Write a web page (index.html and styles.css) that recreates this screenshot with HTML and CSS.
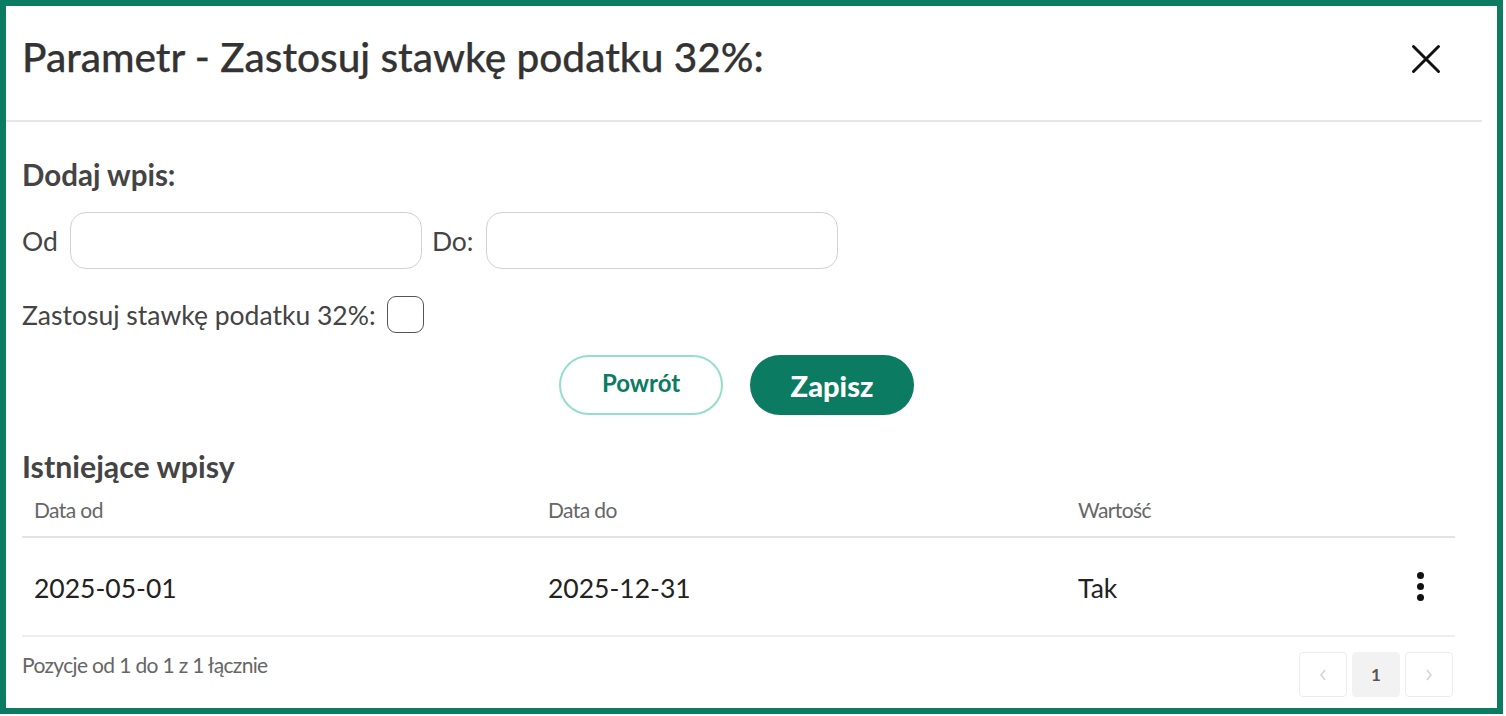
FILE: index.html
```html
<!DOCTYPE html>
<html lang="pl">
<head>
<meta charset="utf-8">
<link rel="stylesheet" href="styles.css">
</head>
<body>
<div class="frame">
  <div class="modal-head">
    <h1 class="title">Parametr - Zastosuj stawkę podatku 32%:</h1>
    <button class="close" aria-label="Zamknij">
      <svg width="30" height="30" viewBox="0 0 30 30"><path d="M2.5 2.5 L27.5 27.5 M27.5 2.5 L2.5 27.5" stroke="#111" stroke-width="3" stroke-linecap="round"/></svg>
    </button>
  </div>
  <div class="body">
    <h2 class="section">Dodaj wpis:</h2>
    <div class="range">
      <label class="lbl">Od</label>
      <div class="input"></div>
      <label class="lbl lbl-do">Do:</label>
      <div class="input"></div>
    </div>
    <div class="check-row">
      <span class="lbl">Zastosuj stawkę podatku 32%:</span>
      <span class="checkbox"></span>
    </div>
    <div class="actions">
      <button class="btn btn-outline">Powrót</button>
      <button class="btn btn-fill">Zapisz</button>
    </div>
    <h2 class="section section-list">Istniejące wpisy</h2>
    <div class="table">
      <div class="thead">
        <div>Data od</div>
        <div>Data do</div>
        <div>Wartość</div>
        <div></div>
      </div>
      <div class="trow">
        <div>2025-05-01</div>
        <div>2025-12-31</div>
        <div>Tak</div>
        <div class="menu-cell"><span class="kebab"><i></i><i></i><i></i></span></div>
      </div>
    </div>
    <div class="footer">
      <span class="info">Pozycje od 1 do 1 z 1 łącznie</span>
      <div class="pager">
        <span class="pg">
          <svg width="10" height="14" viewBox="0 0 10 14"><path d="M7 2 L3 7 L7 12" fill="none" stroke="#d4d4d4" stroke-width="1.6"/></svg>
        </span>
        <span class="pg pg-active">1</span>
        <span class="pg">
          <svg width="10" height="14" viewBox="0 0 10 14"><path d="M3 2 L7 7 L3 12" fill="none" stroke="#d4d4d4" stroke-width="1.6"/></svg>
        </span>
      </div>
    </div>
  </div>
</div>
</body>
</html>
```
FILE: styles.css
```css
* { box-sizing: border-box; }
html, body { margin: 0; padding: 0; background: #fff; }
body { font-family: Lato, "Open Sans", sans-serif; color: #333; }

.frame {
  width: 1503px;
  height: 714px;
  border: 6px solid #0b7b61;
  background: #fff;
  overflow: hidden;
}

.modal-head {
  display: flex;
  align-items: center;
  justify-content: space-between;
  height: 116px;
  margin-right: 15px;
  border-bottom: 2px solid #e6e6e6;
  padding-left: 16px;
  padding-right: 41px;
  padding-bottom: 12px;
}
.title {
  margin: 0;
  font-size: 40.6px;
  font-weight: 500;
  color: #333;
  line-height: 50px;
  -webkit-text-stroke: 0.25px #333;
}
.close {
  border: 0;
  background: none;
  padding: 0;
  width: 30px;
  height: 30px;
  display: flex;
  margin-top: 4px;
}

.body {
  padding: 0 42px 0 16px;
}
.section {
  margin: 36px 0 0;
  font-size: 29.5px;
  font-weight: 700;
  color: #444;
  line-height: 34px;
}
.range {
  display: flex;
  align-items: center;
  gap: 12px;
  margin-top: 20px;
}
.lbl {
  font-size: 26.5px;
  color: #444;
}
.lbl-do { margin-left: -2px; }
.input {
  width: 352px;
  height: 57px;
  border: 1.5px solid #d2d2d2;
  border-radius: 16px;
}
.check-row {
  display: flex;
  align-items: center;
  gap: 10px;
  margin-top: 27px;
}
.checkbox {
  width: 37px;
  height: 37px;
  border: 1.5px solid #555;
  border-radius: 9px;
  margin-left: 1px;
}
.actions {
  display: flex;
  justify-content: center;
  gap: 27px;
  margin-top: 22px;
  padding-right: 4px;
}
.btn {
  width: 164px;
  height: 60px;
  border-radius: 30px;
  font-family: Lato, sans-serif;
  font-weight: 700;
}
.btn-outline {
  background: #fff;
  border: 2px solid #95dec9;
  color: #0b7b61;
  font-size: 24px;
  padding-bottom: 6px;
}
.btn-fill {
  background: #0b7b61;
  border: 0;
  color: #fff;
  font-size: 29px;
  font-weight: 900;
}
.section-list { margin-top: 34px; font-size: 30.3px; }

.thead, .trow {
  display: grid;
  grid-template-columns: 514px 530px 1fr 70px;
  padding-left: 12px;
  align-items: center;
}
.thead {
  height: 55px;
  border-bottom: 2px solid #e3e3e3;
  font-size: 21px;
  color: #666;
  letter-spacing: -0.6px;
}
.trow {
  height: 99px;
  padding-top: 3px;
  border-bottom: 2px solid #eeeeee;
  font-size: 26.5px;
  color: #222;
}
.menu-cell { display: flex; justify-content: center; }
.kebab {
  display: flex;
  flex-direction: column;
  gap: 4px;
  margin-top: -3px;
}
.kebab i {
  width: 7px;
  height: 7px;
  border-radius: 50%;
  background: #111;
}

.footer {
  display: flex;
  justify-content: space-between;
  align-items: flex-start;
  margin-top: 15px;
  padding-right: 2px;
}
.info {
  font-size: 21px;
  line-height: 26px;
  color: #666;
  letter-spacing: -0.65px;
}
.pager {
  display: flex;
  gap: 5px;
}
.pg {
  width: 48px;
  height: 45px;
  border: 1.5px solid #ececec;
  border-radius: 4px;
  display: flex;
  align-items: center;
  justify-content: center;
  font-size: 17px;
  font-weight: 700;
  color: #555;
}
.pg-active {
  background: #f2f2f2;
  border-color: #f2f2f2;
}
```
